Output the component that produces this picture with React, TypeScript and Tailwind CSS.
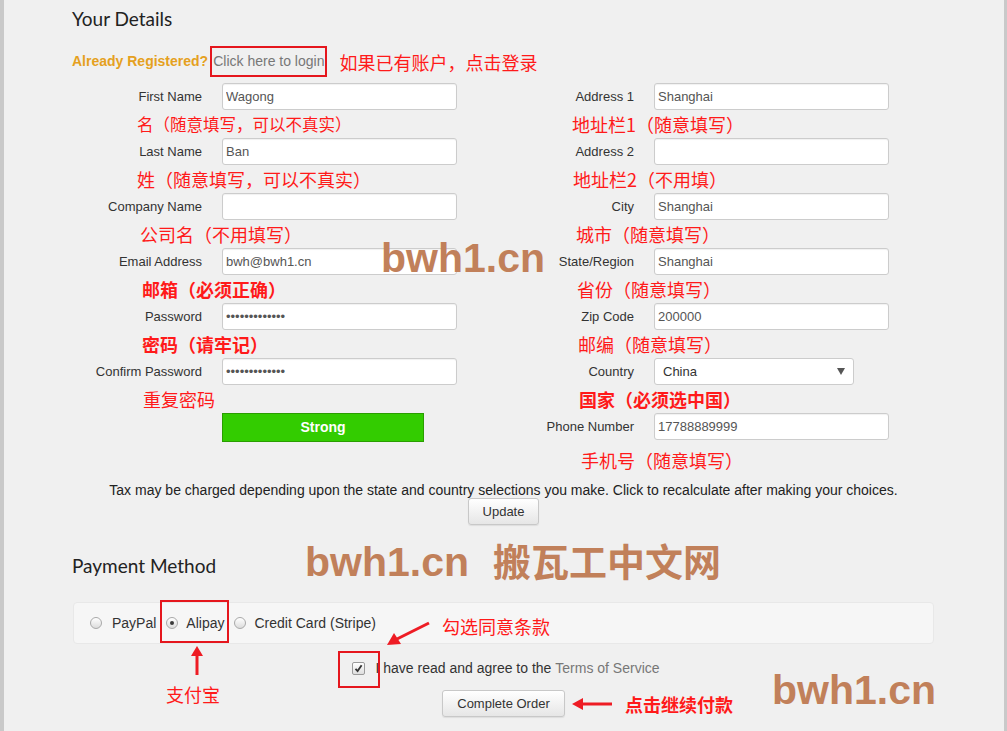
import React from 'react';

type Field = {
  label: string;
  value: string;
  note: string;
  noteCls: string;
  type?: 'password' | 'select';
};

const leftFields: Field[] = [
  { label: 'First Name', value: 'Wagong', note: '名（随意填写，可以不真实）', noteCls: 'ml-[65px] text-[16.5px]' },
  { label: 'Last Name', value: 'Ban', note: '姓（随意填写，可以不真实）', noteCls: 'ml-[65px] text-[18px]' },
  { label: 'Company Name', value: '', note: '公司名（不用填写）', noteCls: 'ml-[68px] text-[18px]' },
  { label: 'Email Address', value: 'bwh@bwh1.cn', note: '邮箱（必须正确）', noteCls: 'ml-[70px] text-[18px] font-bold' },
  { label: 'Password', value: 'aaaaaaaaaaaaa', type: 'password', note: '密码（请牢记）', noteCls: 'ml-[70px] text-[18px] font-bold' },
  { label: 'Confirm Password', value: 'aaaaaaaaaaaaa', type: 'password', note: '重复密码', noteCls: 'ml-[71px] text-[18px]' },
];

const rightFields: Field[] = [
  { label: 'Address 1', value: 'Shanghai', note: '地址栏1（随意填写）', noteCls: 'ml-[68px] text-[18px]' },
  { label: 'Address 2', value: '', note: '地址栏2（不用填）', noteCls: 'ml-[69px] text-[18px]' },
  { label: 'City', value: 'Shanghai', note: '城市（随意填写）', noteCls: 'ml-[72px] text-[18px]' },
  { label: 'State/Region', value: 'Shanghai', note: '省份（随意填写）', noteCls: 'ml-[73px] text-[18px]' },
  { label: 'Zip Code', value: '200000', note: '邮编（随意填写）', noteCls: 'ml-[74px] text-[18px]' },
  { label: 'Country', value: 'China', type: 'select', note: '国家（必须选中国）', noteCls: 'ml-[75px] text-[18px] font-bold' },
  { label: 'Phone Number', value: '17788889999', note: '手机号（随意填写）', noteCls: 'ml-[77px] text-[18px] mt-[6px]' },
];

const inputCls =
  "ml-[20px] w-[235px] h-[27px] bg-white border border-[#cccccc] rounded-[3px] px-[3px] text-[13px] text-[#555] shadow-[inset_0_1px_1px_rgba(0,0,0,0.06)] outline-none font-['Liberation_Sans',Arial,sans-serif]";

function FieldRow({ f }: { f: Field }) {
  return (
    <div className="flex flex-col">
      <div className="flex items-center h-[27px]">
        <label className="w-[130px] text-right text-[13px] text-[#333]">{f.label}</label>
        {f.type === 'select' ? (
          <div className="ml-[20px] w-[200px] h-[27px] bg-white border border-[#cccccc] rounded-[3px] pl-[8px] pr-[8px] flex items-center justify-between text-[13px] text-[#333]">
            <span>{f.value}</span>
            <svg width="8" height="7" viewBox="0 0 8 7">
              <polygon points="0,0 8,0 4,7" fill="#555" />
            </svg>
          </div>
        ) : (
          <input
            className={inputCls}
            type={f.type === 'password' ? 'password' : 'text'}
            defaultValue={f.value}
            readOnly
          />
        )}
      </div>
      <div
        className={
          "h-[28px] flex items-center leading-none text-[#ff1a1a] font-['Noto_Sans_CJK_SC',sans-serif] whitespace-nowrap " +
          f.noteCls
        }
      >
        {f.note}
      </div>
    </div>
  );
}

function Radio({ checked }: { checked?: boolean }) {
  return (
    <span className="w-[12px] h-[12px] rounded-full border border-[#a9a9a9] bg-gradient-to-b from-[#ffffff] to-[#dcdcdc] flex items-center justify-center shrink-0">
      {checked && <span className="w-[4px] h-[4px] rounded-full bg-[#3a3a3a]" />}
    </span>
  );
}

export default function App() {
  return (
    <div className="relative w-full min-h-[731px] bg-[#f0f0f0] shadow-[inset_4px_0_0_#c9c9c9,inset_-3px_0_0_#c9c9c9] overflow-hidden font-['Liberation_Sans',Arial,sans-serif]">
      <div className="pl-[72px] pt-[5px]">
        <h2 className="text-[19px] leading-[28px] font-['Lato',sans-serif] text-[#222]">Your Details</h2>
        <div className="mt-[13px] flex items-center h-[31px]">
          <span className="text-[14px] font-bold text-[#e5a020]">Already Registered?</span>
          <span className="ml-[2px] h-[31px] border-2 border-[#e5161d] px-[1px] flex items-center text-[14px] text-[#777]">
            Click here to login
          </span>
          <span className="ml-[12px] text-[18px] leading-none text-[#ff1a1a] font-['Noto_Sans_CJK_SC',sans-serif]">
            如果已有账户，点击登录
          </span>
        </div>
        <div className="mt-[6px] flex">
          <div className="w-[432px] flex flex-col">
            {leftFields.map((f) => (
              <FieldRow key={f.label} f={f} />
            ))}
            <div className="ml-[150px] w-[202px] h-[29px] bg-[#33cc00] border border-[#2a9e00] flex items-center justify-center text-white font-bold text-[14px]">
              Strong
            </div>
          </div>
          <div className="w-[432px] flex flex-col">
            {rightFields.map((f) => (
              <FieldRow key={f.label} f={f} />
            ))}
          </div>
        </div>
      </div>

      <div className="mt-[8px] flex flex-col items-center">
        <p className="text-[14px] leading-[16px] text-[#222]">
          Tax may be charged depending upon the state and country selections you make. Click to recalculate after making your choices.
        </p>
        <button className="w-[71px] h-[27px] border border-[#c8c8c8] rounded-[3px] bg-gradient-to-b from-[#ffffff] to-[#e6e6e6] shadow-[0_1px_1px_rgba(0,0,0,0.08)] text-[13px] text-[#333]">
          Update
        </button>
      </div>

      <div className="pl-[72px] mt-[27px]">
        <h2 className="text-[19px] leading-[28px] font-['Lato',sans-serif] text-[#222]">Payment Method</h2>
        <div className="mt-[22px] ml-[1px] w-[861px] h-[42px] bg-[#f6f6f6] border border-[#e8e8e8] rounded-[4px] flex items-center pl-[16px] text-[14px] text-[#333]">
          <Radio />
          <span className="ml-[10px]">PayPal</span>
          <span className="ml-[10px]"><Radio checked /></span>
          <span className="ml-[8px]">Alipay</span>
          <span className="ml-[9px]"><Radio /></span>
          <span className="ml-[9px]">Credit Card (Stripe)</span>
        </div>
      </div>

      <div className="mt-[16px] flex justify-center">
        <div className="flex items-center h-[16px] ml-[5px] text-[14px]">
          <span className="w-[13px] h-[13px] rounded-[2px] border border-[#9a9a9a] bg-gradient-to-b from-[#ffffff] to-[#dedede] flex items-center justify-center">
            <svg width="9" height="9" viewBox="0 0 9 9">
              <path d="M1.5 4.8 L3.6 7 L7.6 1.2" fill="none" stroke="#333" strokeWidth="1.8" />
            </svg>
          </span>
          <span className="ml-[10px] text-[#333] whitespace-pre">I have read and agree to the </span>
          <span className="text-[#777]">Terms of Service</span>
        </div>
      </div>
      <div className="mt-[14px] flex justify-center">
        <button className="w-[123px] h-[27px] border border-[#c8c8c8] rounded-[3px] bg-gradient-to-b from-[#ffffff] to-[#e6e6e6] shadow-[0_1px_1px_rgba(0,0,0,0.08)] text-[13px] text-[#333]">
          Complete Order
        </button>
      </div>

      {/* Overlays: watermarks */}
      <div className="absolute left-[381px] top-[238px] text-[41px] leading-none font-bold text-[#c1805a] whitespace-nowrap">
        bwh1.cn
      </div>
      <div className="absolute left-[305px] top-[541px] text-[41px] leading-none font-bold text-[#c1805a] whitespace-nowrap flex items-baseline">
        <span>bwh1.cn</span>
        <span className="ml-[24px] font-['Noto_Sans_CJK_SC',sans-serif] text-[38px]">搬瓦工中文网</span>
      </div>
      <div className="absolute left-[772px] top-[670px] text-[41px] leading-none font-bold text-[#c1805a] whitespace-nowrap">
        bwh1.cn
      </div>

      {/* Red highlight boxes */}
      <div className="absolute left-[160px] top-[600px] w-[69px] h-[43px] border-2 border-[#e5161d]" />
      <div className="absolute left-[338px] top-[651px] w-[42px] h-[37px] border-2 border-[#e5161d]" />

      {/* Up arrow to Alipay */}
      <svg className="absolute left-[188px] top-[646px]" width="18" height="30" viewBox="0 0 18 30">
        <polygon points="9,0 15,10 3,10" fill="#ee1c24" />
        <rect x="7.5" y="9" width="3" height="20" fill="#ee1c24" />
      </svg>
      <div className="absolute left-[166px] top-[681px] text-[18px] leading-[26px] text-[#ff1a1a] font-['Noto_Sans_CJK_SC',sans-serif]">
        支付宝
      </div>

      {/* Diagonal arrow to checkbox */}
      <svg className="absolute left-[383px] top-[618px]" width="50" height="32" viewBox="0 0 50 32">
        <line x1="46" y1="5" x2="14" y2="21" stroke="#ee1c24" strokeWidth="3" />
        <polygon points="4,27 11,15 18,26" fill="#ee1c24" />
      </svg>
      <div className="absolute left-[442px] top-[613px] text-[18px] leading-[26px] text-[#ff1a1a] font-['Noto_Sans_CJK_SC',sans-serif]">
        勾选同意条款
      </div>

      {/* Left arrow to Complete Order */}
      <svg className="absolute left-[571px] top-[697px]" width="42" height="14" viewBox="0 0 42 14">
        <polygon points="1,7 12,1 12,13" fill="#ee1c24" />
        <rect x="11" y="5.5" width="30" height="3" fill="#ee1c24" />
      </svg>
      <div className="absolute left-[625px] top-[691px] text-[18px] leading-[26px] font-bold text-[#ff1a1a] font-['Noto_Sans_CJK_SC',sans-serif]">
        点击继续付款
      </div>
    </div>
  );
}
